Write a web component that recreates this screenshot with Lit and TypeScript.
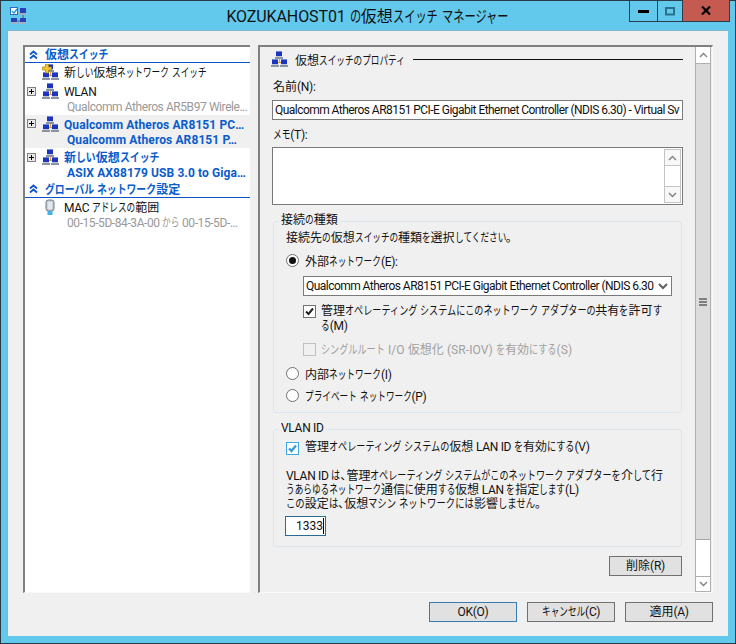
import { LitElement, html, css, svg } from "lit";
import { customElement } from "lit/decorators.js";

/* Meiryo UI has condensed kana: squeeze kana runs horizontally, and tighten Latin runs. */
const t = (str: string, scale = 0.72) =>
  str.split(/([\u3040-\u30ff]+|[\x20-\x7e…]+)/).filter(Boolean).map((run) => {
    if (/^[\u3040-\u30ff]/.test(run)) {
      const m = `${(-run.length * (1 - scale)).toFixed(3)}em`;
      return html`<span class="kt" style="transform:scaleX(${scale});margin-right:${m}">${run}</span>`;
    }
    if (/^[\x20-\x7e…]/.test(run)) return html`<span class="l">${run}</span>`;
    return run;
  });

const mon = (x: number, y: number) => svg`<rect x="${x}" y="${y}" width="6" height="5" fill="#1c34c0"/><rect x="${x}" y="${y}" width="6" height="1" fill="#6c88d8"/><rect x="${x}" y="${y + 5}" width="6" height="1" fill="#c0c8d4"/><rect x="${x - 1}" y="${y + 6}" width="8" height="2" fill="#8c94a4"/>`;
const net = () => svg`<path d="M8.5 8v3M4 11.5h9" stroke="#e0a020" fill="none"/>${mon(5, 0)}${mon(1, 8)}${mon(10, 8)}`;
const netIcon = html`<svg class="ic" width="17" height="16" viewBox="0 0 17 16">${net()}</svg>`;
const newNetIcon = html`<svg class="ic" width="17" height="16" viewBox="0 0 17 16">${net()}<path d="M3.5 0h3v3h3v3h-3v3h-3V6H.5V3h3z" fill="#f0c830" stroke="#a88010" stroke-width=".7"/></svg>`;
const plus = html`<svg class="plus" width="9" height="9" viewBox="0 0 9 9"><rect x=".5" y=".5" width="8" height="8" fill="#e8e8e8" stroke="#808080"/><path d="M2 4.5h5M4.5 2v5" stroke="#000"/></svg>`;
const chev = html`<svg class="chev" width="9" height="10" viewBox="0 0 9 10"><path d="M1 4.5l3.5-3 3.5 3M1 8.5l3.5-3 3.5 3" fill="none" stroke="#0a56c8" stroke-width="1.8"/></svg>`;
const macIcon = html`<svg class="ic mac" width="10" height="17" viewBox="0 0 10 17"><rect x="1" y="1" width="8" height="11" rx="2.5" fill="#c8d0d8" stroke="#6c7884"/><path d="M4 3v7M6 3v7" stroke="#fff"/><rect x="2.5" y="12" width="5" height="4" fill="#40b4e8"/></svg>`;

@customElement("app-root")
export class AppRoot extends LitElement {
  static styles = css`
    :host { display: block; width: 736px; height: 644px; font: 12px Roboto, "Noto Sans CJK JP", sans-serif; font-feature-settings: "palt"; color: #111; --ls: -.3px; }
    * { box-sizing: border-box; }
    .kt { display: inline-block; white-space: pre; transform-origin: 0 0; font-feature-settings: normal; }
    .l { letter-spacing: var(--ls); white-space: pre; }
    .win { width: 736px; height: 644px; background: #63c9ec; border: 1px solid #2a3a44; display: flex; flex-direction: column; }
    .title { height: 30px; flex: none; position: relative; }
    .appicon { position: absolute; left: 9px; top: 6px; }
    .tt { position: absolute; left: 0; right: 0; top: 6px; text-align: center; font-size: 16px; line-height: 20px; color: #111; padding-right: 2px; --ls: -.1px; }
    .caps { position: absolute; left: 628px; top: -1px; display: flex; height: 22px; }
    .cap { border: 1px solid #2c3c48; border-left-width: 0; height: 22px; display: flex; align-items: center; justify-content: center; }
    .cap.a { width: 29px; border-left-width: 1px; }
    .cap.b { width: 25px; }
    .cap.c { width: 47px; background: #c55b50; border: 0; border-bottom: 1px solid #2c3c48; border-right: 1px solid #2c3c48; }
    .client { margin: 0 7px 7px 7px; flex: 1; background: #f0f0f0; padding: 14px 15px 0 15px; display: flex; flex-direction: column; box-shadow: -1px -1px 0 #7fb6cc; }
    .panes { display: flex; gap: 8px; height: 548px; flex: none; }
    .left { width: 227px; background: #fff; border: 2px solid #808080; border-right: 0; border-bottom: 1px solid #f8f8f8; }
    .sec { height: 16px; display: flex; align-items: center; border-bottom: 1px solid #0a56c8; color: #0a5ccc; font-weight: 700; line-height: 15px; padding-left: 4px; --ls: .15px; }
    .sec span.h { position: relative; top: 1px; }
    .sec .chev { margin-right: 7px; }
    .sec.g { height: 17px; }
    .row { display: grid; grid-template-columns: 15px 16px 6px minmax(0, 1fr); grid-template-rows: 15px 15px; padding: 3px 0 0 2px; white-space: nowrap; height: 33px; width: 225px; }
    .plus { grid-column: 1; grid-row: 1 / span 2; margin-top: 2px; }
    .ic { grid-column: 2; grid-row: 1 / span 2; margin-top: -2px; display: block; }
    .mac { margin-left: 3px; }
    .t { grid-column: 4; grid-row: 1; line-height: 15px; }
    .s { grid-column: 4; grid-row: 2; line-height: 15px; color: #999; padding-left: 3px; --ls: -.42px; }
    .sel { background: #f0f0f0; }
    .sel .plus { margin-top: 1px; }
    .blue .t, .blue .s { color: #0a5ccc; font-weight: 700; --ls: .1px; }
    .row.first { height: 19px; }
    .right { flex: 1; background: #f0f0f0; border-top: 2px solid #808080; border-left: 2px solid #808080; border-right: 1px solid #fafafa; border-bottom: 1px solid #fafafa; padding-right: 1px; display: flex; }
    .body { flex: 1; min-width: 0; padding-left: 12px; display: flex; flex-direction: column; }
    .head { display: flex; align-items: center; height: 24px; flex: none; white-space: nowrap; }
    .head .ic { margin: 0 0 0 -1px; }
    .head .txt { margin-left: 7px; }
    .head .ln { flex: none; width: 270px; height: 1px; background: #111; margin-left: auto; margin-right: 12px; }
    .lbl { line-height: 16px; margin-left: 1px; flex: none; }
    .lbl.n { margin-top: 8px; margin-bottom: 5px; }
    .lbl.m { margin-top: 7px; margin-bottom: 4px; }
    .input { height: 20px; flex: none; background: #fff; border: 1px solid #7a7a7a; width: 411px; line-height: 18px; padding-left: 2px; white-space: nowrap; --ls: -.54px; }
    .memo { height: 58px; flex: none; background: #fff; border: 1px solid #7a7a7a; width: 411px; display: flex; justify-content: flex-end; padding: 1px; }
    .msb { width: 17px; display: flex; flex-direction: column; border: 1px solid #c4c4c4; background: #fff; }
    .msb .b { height: 16px; display: flex; align-items: center; justify-content: center; background: #f8f8f8; }
    .msb .b.u { border-bottom: 1px solid #c4c4c4; }
    .msb .b.d { border-top: 1px solid #c4c4c4; margin-top: auto; }
    .group { position: relative; width: 409px; flex: none; margin-left: 1px; border: 1px solid #dce5ec; border-radius: 3px; padding-left: 12px; }
    .leg { position: absolute; left: 5px; top: -9px; background: #f0f0f0; padding: 0 2px; line-height: 15px; white-space: nowrap; }
    .g1 { height: 192px; margin-top: 16px; padding-top: 9px; }
    .g2 { height: 118px; margin-top: 16px; padding-top: 10px; }
    .hint { line-height: 15px; margin-bottom: 4px; white-space: nowrap; }
    .radio { display: flex; align-items: center; height: 20px; gap: 6px; white-space: nowrap; }
    .radio.r2 { margin-top: 5px; }
    .radio.r3 { margin-top: 2px; }
    .rc { width: 13px; height: 13px; border-radius: 50%; border: 1px solid #707070; background: #fff; display: flex; align-items: center; justify-content: center; flex: none; }
    .rc i { width: 7px; height: 7px; border-radius: 50%; background: #111; }
    .sel-box { width: 369px; height: 20px; margin: 6px 0 0 17px; border: 1px solid #7a7a7a; background: #fff; line-height: 18px; padding-left: 2px; display: flex; justify-content: space-between; white-space: nowrap; --ls: -.54px; }
    .sel-box svg { margin: 6px 3px 0 0; flex: none; }
    .chk { display: flex; gap: 5px; margin-left: 17px; line-height: 15px; white-space: nowrap; }
    .chk.c1 { margin-top: 8px; }
    .chk.c2 { margin-top: 9px; }
    .chk.c3 { margin-left: 0; gap: 6px; }
    .cb { width: 13px; height: 13px; border: 1px solid #707070; background: #fff; flex: none; margin-top: 1px; display: flex; }
    .cb.on { border-color: #3ca8e8; margin-top: 2px; }
    .cb.d { border-color: #c0c0c0; background: #f0f0f0; margin-top: 0; }
    .dis { color: #a0a0a0; --ls: .1px; }
    .vt { margin-top: 14px; line-height: 14px; white-space: nowrap; }
    .num { width: 41px; height: 20px; margin-left: -1px; border: 1px solid #2f6a94; background: #fff; margin-top: 5px; line-height: 18px; padding-right: 1px; display: flex; justify-content: flex-end; }
    .num b { width: 1px; height: 16px; background: #000; margin-top: 1px; }
    .btn { height: 20px; background: #e1e1e1; border: 1px solid #707070; text-align: center; line-height: 18px; flex: none; white-space: nowrap; }
    .del { align-self: flex-end; width: 73px; margin: 9px 13px 0 0; }
    .bar { width: 16px; flex: none; display: flex; flex-direction: column; background: #fff; border-left: 1px solid #b0b0b0; border-right: 1px solid #b0b0b0; }
    .bar .up, .bar .dn { height: 16px; flex: none; display: flex; align-items: center; justify-content: center; }
    .bar .dn { border-top: 1px solid #b0b0b0; border-bottom: 1px solid #b0b0b0; }
    .bar .th { height: 477px; flex: none; background: #dcdcdc; border-top: 1px solid #b0b0b0; border-bottom: 1px solid #a8a8a8; display: flex; align-items: center; justify-content: center; }
    .bar .sp { flex: 1; }
    .foot { display: flex; justify-content: flex-end; gap: 10px; margin-top: 9px; }
    .foot .btn { width: 88px; }
    .foot .btn.d { border-color: #3b7cb0; }
  `;

  render() {
    const up = html`<svg width="9" height="6" viewBox="0 0 9 6"><path d="M1 5l3.5-3.5L8 5" fill="none" stroke="#808080" stroke-width="1.4"/></svg>`;
    const dn = html`<svg width="9" height="6" viewBox="0 0 9 6"><path d="M1 1l3.5 3.5L8 1" fill="none" stroke="#808080" stroke-width="1.4"/></svg>`;
    const dnD = html`<svg width="10" height="7" viewBox="0 0 10 7"><path d="M1 1l4 4 4-4" fill="none" stroke="#606060" stroke-width="2"/></svg>`;
    return html`<div class="win">
      <div class="title">
        <svg class="appicon" width="17" height="18" viewBox="0 0 17 18">
          <rect x=".5" y=".5" width="7" height="7" fill="#fff" stroke="#3068c8"/><path d="M2 4l2 2 3-4" stroke="#2090d0" fill="none" stroke-width="1.3"/>
          <rect x="10" y="1" width="6" height="5" fill="#2840b8"/><rect x="10" y="6" width="6" height="2" fill="#a8b0c0"/>
          <rect x="1" y="11" width="6" height="4" fill="#2840b8"/><rect x="1" y="15" width="6" height="2" fill="#a8b0c0"/>
          <rect x="10" y="11" width="6" height="4" fill="#2840b8"/><rect x="10" y="15" width="6" height="2" fill="#a8b0c0"/>
          <path d="M13 8v3M7 14h3" stroke="#506070"/>
        </svg>
        <div class="tt">${t("KOZUKAHOST01 の仮想スイッチ マネージャー", 0.7)}</div>
        <div class="caps">
          <div class="cap a"><svg width="11" height="4"><rect width="11" height="3" y="1" fill="#000"/></svg></div>
          <div class="cap b"><svg width="10" height="9"><rect x="1" y="1" width="8" height="6.5" fill="none" stroke="#2c7090" stroke-width="2"/></svg></div>
          <div class="cap c"><svg width="10" height="9" viewBox="0 0 10 9"><path d="M1 .5l8 8M9 .5l-8 8" stroke="#000" stroke-width="2.2"/></svg></div>
        </div>
      </div>
      <div class="client">
        <div class="panes">
          <div class="left">
            <div class="sec">${chev}<span class="h">${t("仮想スイッチ", 0.82)}</span></div>
            <div class="row first"><span></span>${newNetIcon}<span></span><div class="t">${t("新しい仮想ネットワーク スイッチ")}</div></div>
            <div class="row">${plus}${netIcon}<div class="t">${t("WLAN")}</div><div class="s">${t("Qualcomm Atheros AR5B97 Wirele…")}</div></div>
            <div class="row sel blue">${plus}${netIcon}<div class="t">${t("Qualcomm Atheros AR8151 PC…")}</div><div class="s">${t("Qualcomm Atheros AR8151 P…")}</div></div>
            <div class="row blue">${plus}${netIcon}<div class="t">${t("新しい仮想スイッチ", 0.82)}</div><div class="s">${t("ASIX AX88179 USB 3.0 to Giga…")}</div></div>
            <div class="sec g">${chev}<span class="h">${t("グローバル ネットワーク設定", 0.82)}</span></div>
            <div class="row">${macIcon}<div class="t">${t("MAC アドレスの範囲")}</div><div class="s">${t("00-15-5D-84-3A-00 から 00-15-5D-…")}</div></div>
          </div>
          <div class="right">
            <div class="body">
              <div class="head">${netIcon}<span class="txt">${t("仮想スイッチのプロパティ")}</span><span class="ln"></span></div>
              <div class="lbl n">${t("名前(N):")}</div>
              <div class="input">${t("Qualcomm Atheros AR8151 PCI-E Gigabit Ethernet Controller (NDIS 6.30) - Virtual Sv")}</div>
              <div class="lbl m">${t("メモ(T):")}</div>
              <div class="memo"><div class="msb"><span class="b u">${up}</span><span class="b d">${dn}</span></div></div>
              <div class="group g1">
                <div class="leg">${t("接続の種類")}</div>
                <div class="hint">${t("接続先の仮想スイッチの種類を選択してください。")}</div>
                <div class="radio"><span class="rc"><i></i></span><span>${t("外部ネットワーク(E):")}</span></div>
                <div class="sel-box"><span class="v">${t("Qualcomm Atheros AR8151 PCI-E Gigabit Ethernet Controller (NDIS 6.30")}</span>${dnD}</div>
                <div class="chk c1"><span class="cb"><svg width="11" height="11" viewBox="0 0 11 11"><path d="M2 5.5l2.5 2.5L9 2.5" fill="none" stroke="#222" stroke-width="2"/></svg></span><span>${t("管理オペレーティング システムにこのネットワーク アダプターの共有を許可す", 0.76)}<br>${t("る(M)")}</span></div>
                <div class="chk dis c2"><span class="cb d"></span><span>${t("シングルルート I/O 仮想化 (SR-IOV) を有効にする(S)", 0.76)}</span></div>
                <div class="radio r2"><span class="rc"></span><span>${t("内部ネットワーク(I)")}</span></div>
                <div class="radio r3"><span class="rc"></span><span>${t("プライベート ネットワーク(P)")}</span></div>
              </div>
              <div class="group g2">
                <div class="leg">${t("VLAN ID")}</div>
                <div class="chk c3"><span class="cb on"><svg width="11" height="11" viewBox="0 0 11 11"><path d="M2 5.5l2.5 2.5L9 2.5" fill="none" stroke="#3a9ad9" stroke-width="2.4"/></svg></span><span>${t("管理オペレーティング システムの仮想 LAN ID を有効にする(V)", 0.76)}</span></div>
                <div class="vt">${t("VLAN ID は、管理オペレーティング システムがこのネットワーク アダプターを介して行", 0.76)}<br>${t("うあらゆるネットワーク通信に使用する仮想 LAN を指定します(L)")}<br>${t("この設定は、仮想マシン ネットワークには影響しません。", 0.78)}</div>
                <div class="num">1333<b></b></div>
              </div>
              <div class="btn del">${t("削除(R)")}</div>
            </div>
            <div class="bar">
              <div class="up">${up}</div>
              <div class="th"><svg width="8" height="8"><path d="M0 1h8M0 4h8M0 7h8" stroke="#606060" stroke-width="1.3"/></svg></div>
              <div class="sp"></div>
              <div class="dn">${dn}</div>
            </div>
          </div>
        </div>
        <div class="foot">
          <div class="btn d">${t("OK(O)")}</div>
          <div class="btn">${t("キャンセル(C)")}</div>
          <div class="btn">${t("適用(A)")}</div>
        </div>
      </div>
    </div>`;
  }
}
